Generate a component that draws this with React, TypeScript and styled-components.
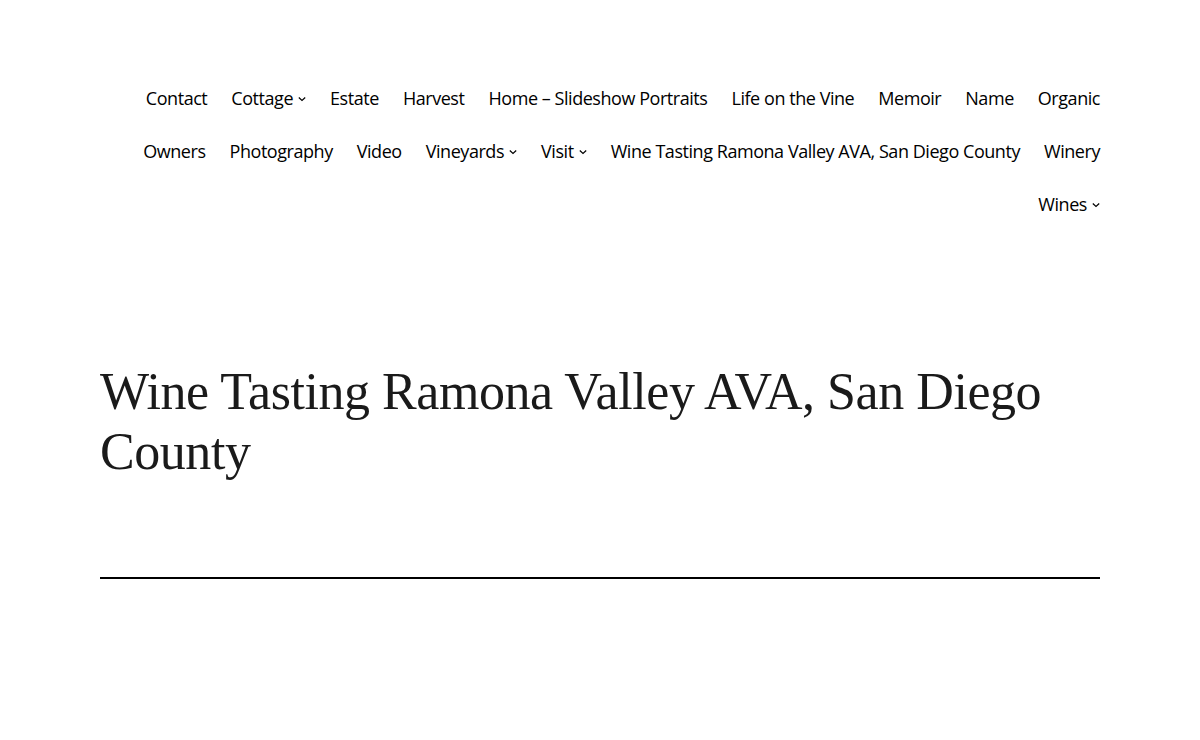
import styled, { createGlobalStyle } from "styled-components";

const GlobalStyle = createGlobalStyle`
  body {
    margin: 0;
    background: #ffffff;
    color: #000000;
    font-family: "Open Sans", "Noto Sans", sans-serif;
  }
  * {
    box-sizing: border-box;
  }
`;

const Page = styled.div`
  width: 1000px;
  margin: 0 auto;
  padding-top: 85px;
`;

const Header = styled.header`
  display: flex;
  justify-content: flex-end;
`;

const NavList = styled.ul`
  list-style: none;
  margin: 0;
  padding: 0;
  display: flex;
  flex-wrap: wrap;
  justify-content: flex-end;
  column-gap: 24px;
  row-gap: 27px;
`;

const NavItem = styled.li`
  display: flex;
  align-items: center;
  gap: 5px;
  font-size: 18px;
  line-height: 26px;
  color: #000;
  letter-spacing: -0.45px;
`;

const Chevron = styled.svg`
  width: 8px;
  height: 6px;
  margin-top: 2px;
`;

const Main = styled.main`
  padding-top: 145px;
`;

const Title = styled.h1`
  margin: 0;
  font-family: "Liberation Serif", "DejaVu Serif", serif;
  font-weight: 300;
  font-size: 52px;
  line-height: 60px;
  letter-spacing: -0.45px;
  color: #1a1a1a;
`;

const Separator = styled.hr`
  margin: 95px 0 0;
  border: none;
  border-top: 2px solid #000;
`;

const items: { label: string; sub?: boolean }[] = [
  { label: "Contact" },
  { label: "Cottage", sub: true },
  { label: "Estate" },
  { label: "Harvest" },
  { label: "Home – Slideshow Portraits" },
  { label: "Life on the Vine" },
  { label: "Memoir" },
  { label: "Name" },
  { label: "Organic" },
  { label: "Owners" },
  { label: "Photography" },
  { label: "Video" },
  { label: "Vineyards", sub: true },
  { label: "Visit", sub: true },
  { label: "Wine Tasting Ramona Valley AVA, San Diego County" },
  { label: "Winery" },
  { label: "Wines", sub: true },
];

function App() {
  return (
    <>
      <GlobalStyle />
      <Page>
        <Header>
          <nav>
            <NavList>
              {items.map((item) => (
                <NavItem key={item.label}>
                  {item.label}
                  {item.sub && (
                    <Chevron viewBox="0 0 8 6" fill="none">
                      <path d="M0.8 1.5l3.2 3 3.2-3" stroke="#000" strokeWidth="1.2" />
                    </Chevron>
                  )}
                </NavItem>
              ))}
            </NavList>
          </nav>
        </Header>
        <Main>
          <Title>Wine Tasting Ramona Valley AVA, San Diego County</Title>
          <Separator />
        </Main>
      </Page>
    </>
  );
}

export default App;
